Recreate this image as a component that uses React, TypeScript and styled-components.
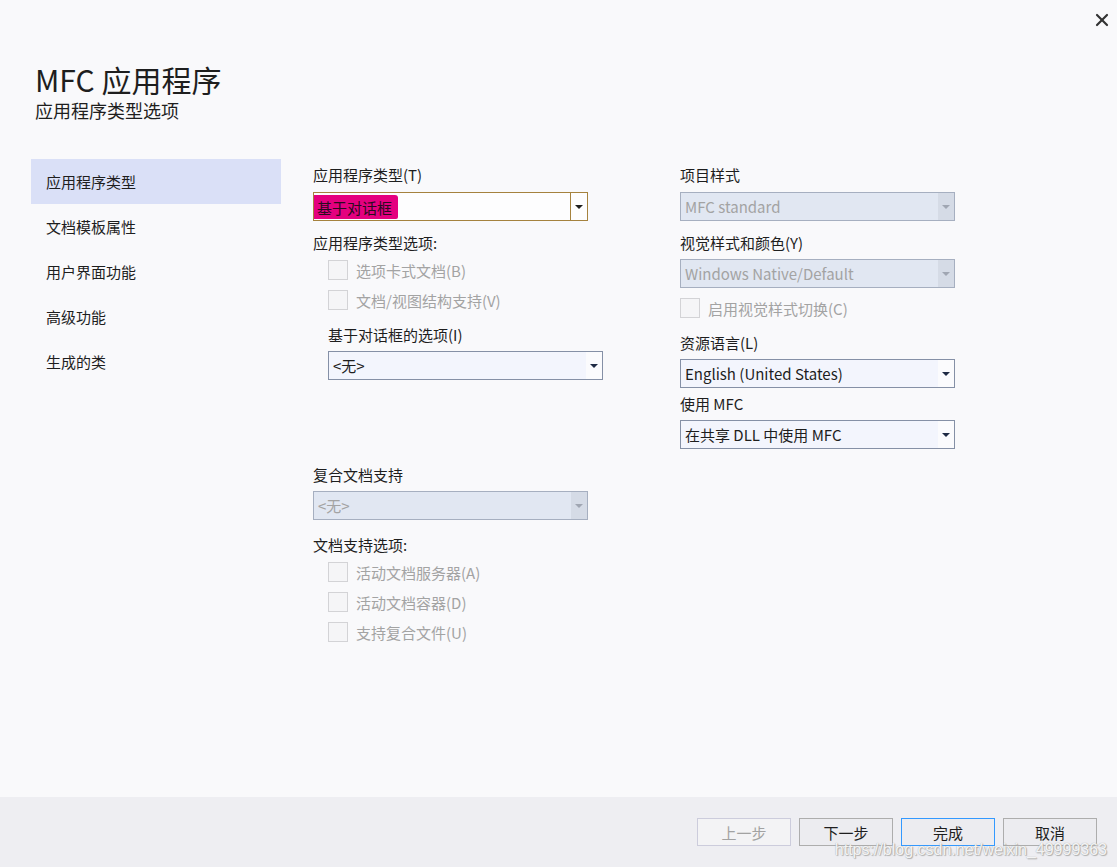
import React from "react";
import styled, { createGlobalStyle } from "styled-components";
import { X } from "lucide-react";

const FONT = `"Segoe UI", "Noto Sans CJK SC", "Noto Sans", sans-serif`;
const TEXT = "#1e1e1e";
const DISABLED_TEXT = "#a3a3a3";

const GlobalStyle = createGlobalStyle`
    html, body {
        margin: 0;
        padding: 0;
        background: #f9f9fb;
    }
    body {
        font-family: ${FONT};
        color: ${TEXT};
    }
`;

/**
 * Window frame:
 */
const Window = styled.div`
    position: relative;
    width: 1117px;
    height: 867px;
    display: flex;
    flex-direction: column;
    background: #f9f9fb;
    overflow: hidden;
`,
    CloseButton = styled.div`
    position: absolute;
    top: 10px;
    right: 5px;
    color: #333;
    display: flex;
`,
    Content = styled.div`
    flex: 1;
    display: flex;
    flex-direction: column;
`,
    Header = styled.div`
    padding: 62px 0 0 35px;
    display: flex;
    flex-direction: column;
    gap: 4px;
`,
    Title = styled.div`
    font-size: 30px;
    line-height: 34px;
`,
    Subtitle = styled.div`
    font-size: 18px;
    line-height: 20px;
`,
    Body = styled.div`
    display: flex;
    margin-top: 39px;
    padding-left: 31px;
`;

/**
 * Left navigation:
 */
const Nav = styled.div`
    width: 250px;
    display: flex;
    flex-direction: column;
`,
    NavItem = styled.div<{ $active?: boolean }>`
    height: 45px;
    display: flex;
    align-items: center;
    padding: 0 0 1px 15px;
    box-sizing: border-box;
    font-size: 15px;
    background: ${(p) => (p.$active ? "#dae0f7" : "transparent")};
`;

/**
 * Option columns:
 */
const Column = styled.div<{ $left: number; $width: number }>`
    margin-left: ${(p) => p.$left}px;
    width: ${(p) => p.$width}px;
    padding-top: 6px;
    display: flex;
    flex-direction: column;
`,
    Label = styled.div<{ $mt?: number; $indent?: boolean; $disabled?: boolean }>`
    font-size: 15px;
    line-height: 20px;
    margin-top: ${(p) => p.$mt ?? 0}px;
    margin-left: ${(p) => (p.$indent ? 15 : 0)}px;
    color: ${(p) => (p.$disabled ? DISABLED_TEXT : TEXT)};
    white-space: nowrap;
`;

type ComboKind = "focused" | "normal" | "disabled";
const comboColors: Record<ComboKind, { border: string; bg: string; arrowBg: string; arrow: string; text: string }> = {
    focused: { border: "#a5823e", bg: "#fdfdfe", arrowBg: "#fdfdfe", arrow: "#1e1e1e", text: TEXT },
    normal: { border: "#8590a6", bg: "#f3f5fd", arrowBg: "#fbfbfd", arrow: "#1e2a44", text: TEXT },
    disabled: { border: "#a6afc0", bg: "#e1e7f2", arrowBg: "#d5dbe6", arrow: "#a0a6b2", text: DISABLED_TEXT },
};

const ComboBox = styled.div<{ $kind: ComboKind; $mt?: number; $indent?: boolean }>`
    box-sizing: border-box;
    width: 275px;
    height: 29px;
    margin-top: ${(p) => p.$mt ?? 0}px;
    margin-left: ${(p) => (p.$indent ? 15 : 0)}px;
    display: flex;
    border: 1px solid ${(p) => comboColors[p.$kind].border};
    background: ${(p) => comboColors[p.$kind].bg};
    color: ${(p) => comboColors[p.$kind].text};
    font-size: 15px;
`,
    ComboText = styled.div`
    flex: 1;
    display: flex;
    align-items: center;
    padding-left: 4px;
    white-space: nowrap;
    overflow: hidden;
`,
    ComboArrow = styled.div<{ $kind: ComboKind }>`
    width: 16px;
    display: flex;
    align-items: center;
    justify-content: center;
    background: ${(p) => comboColors[p.$kind].arrowBg};
    border-left: ${(p) => (p.$kind === "focused" ? `1px solid ${comboColors.focused.border}` : "none")};
    &::after {
        content: "";
        border-left: 4px solid transparent;
        border-right: 4px solid transparent;
        border-top: 4px solid ${(p) => comboColors[p.$kind].arrow};
    }
`,
    Highlight = styled.span`
    background: #e4007f;
    color: #2a0a20;
    padding: 2px 6px 1px 3px;
    margin-left: -4px;
    border-radius: 0 3px 2px 0;
`;

const CheckRow = styled.div<{ $mt?: number; $indent?: boolean }>`
    display: flex;
    align-items: center;
    height: 20px;
    margin-top: ${(p) => p.$mt ?? 0}px;
    margin-left: ${(p) => (p.$indent ? 15 : 0)}px;
    gap: 8px;
    font-size: 15px;
    color: ${DISABLED_TEXT};
    white-space: nowrap;
`,
    CheckBox = styled.div`
    box-sizing: border-box;
    width: 20px;
    height: 20px;
    border: 1px solid #d3d3d6;
    background: #f5f5f7;
`;

/**
 * Footer with the wizard buttons:
 */
const Footer = styled.div`
    height: 70px;
    background: #eeeef2;
    display: flex;
    justify-content: flex-end;
    align-items: flex-start;
    gap: 8px;
    padding: 21px 20px 0 0;
    box-sizing: border-box;
`,
    Button = styled.div<{ $disabled?: boolean; $default?: boolean }>`
    box-sizing: border-box;
    width: 94px;
    height: 28px;
    display: flex;
    align-items: center;
    justify-content: center;
    font-size: 15px;
    background: ${(p) => (p.$disabled ? "#f3f3f5" : "#ececf0")};
    color: ${(p) => (p.$disabled ? "#a2a2a2" : TEXT)};
    border: 1px solid ${(p) => (p.$default ? "#3399ff" : p.$disabled ? "#ccccdc" : "#adadad")};
`,
    Watermark = styled.div`
    position: absolute;
    right: 10px;
    bottom: 8px;
    font-family: "Liberation Sans", Arial, sans-serif;
    font-size: 16px;
    color: rgba(255, 255, 255, 0.9);
    text-shadow: 0 0 1px #9a9a9a, 1px 1px 1px #b0b0b0;
`;

const Combo = (props: { kind: ComboKind; mt?: number; indent?: boolean; children: React.ReactNode }) => (
    <ComboBox $kind={props.kind} $mt={props.mt} $indent={props.indent}>
        <ComboText>{props.children}</ComboText>
        <ComboArrow $kind={props.kind} />
    </ComboBox>
);

const Check = (props: { mt?: number; indent?: boolean; children: React.ReactNode }) => (
    <CheckRow $mt={props.mt} $indent={props.indent}>
        <CheckBox />
        {props.children}
    </CheckRow>
);

const NAV_ITEMS = ["应用程序类型", "文档模板属性", "用户界面功能", "高级功能", "生成的类"];

export default function App() {
    return (
        <Window>
            <GlobalStyle />
            <CloseButton>
                <X size={20} strokeWidth={2.6} />
            </CloseButton>
            <Content>
                <Header>
                    <Title>MFC 应用程序</Title>
                    <Subtitle>应用程序类型选项</Subtitle>
                </Header>
                <Body>
                    <Nav>
                        {NAV_ITEMS.map((item, i) => (
                            <NavItem key={item} $active={i === 0}>{item}</NavItem>
                        ))}
                    </Nav>
                    <Column $left={32} $width={290}>
                        <Label>应用程序类型(T)</Label>
                        <Combo kind="focused" mt={7}>
                            <Highlight>基于对话框</Highlight>
                        </Combo>
                        <Label $mt={12}>应用程序类型选项:</Label>
                        <Check mt={7} indent>选项卡式文档(B)</Check>
                        <Check mt={10} indent>文档/视图结构支持(V)</Check>
                        <Label $mt={15} $indent>基于对话框的选项(I)</Label>
                        <Combo kind="normal" mt={6} indent>&lt;无&gt;</Combo>
                        <Label $mt={85}>复合文档支持</Label>
                        <Combo kind="disabled" mt={6}>&lt;无&gt;</Combo>
                        <Label $mt={15}>文档支持选项:</Label>
                        <Check mt={7} indent>活动文档服务器(A)</Check>
                        <Check mt={10} indent>活动文档容器(D)</Check>
                        <Check mt={10} indent>支持复合文件(U)</Check>
                    </Column>
                    <Column $left={77} $width={275}>
                        <Label>项目样式</Label>
                        <Combo kind="disabled" mt={7}>MFC standard</Combo>
                        <Label $mt={12}>视觉样式和颜色(Y)</Label>
                        <Combo kind="disabled" mt={6}>Windows Native/Default</Combo>
                        <Check mt={10}>启用视觉样式切换(C)</Check>
                        <Label $mt={15}>资源语言(L)</Label>
                        <Combo kind="normal" mt={6}>English (United States)</Combo>
                        <Label $mt={6}>使用 MFC</Label>
                        <Combo kind="normal" mt={6}>在共享 DLL 中使用 MFC</Combo>
                    </Column>
                </Body>
            </Content>
            <Footer>
                <Button $disabled>上一步</Button>
                <Button>下一步</Button>
                <Button $default>完成</Button>
                <Button>取消</Button>
            </Footer>
            <Watermark>https://blog.csdn.net/weixin_49999363</Watermark>
        </Window>
    );
}
